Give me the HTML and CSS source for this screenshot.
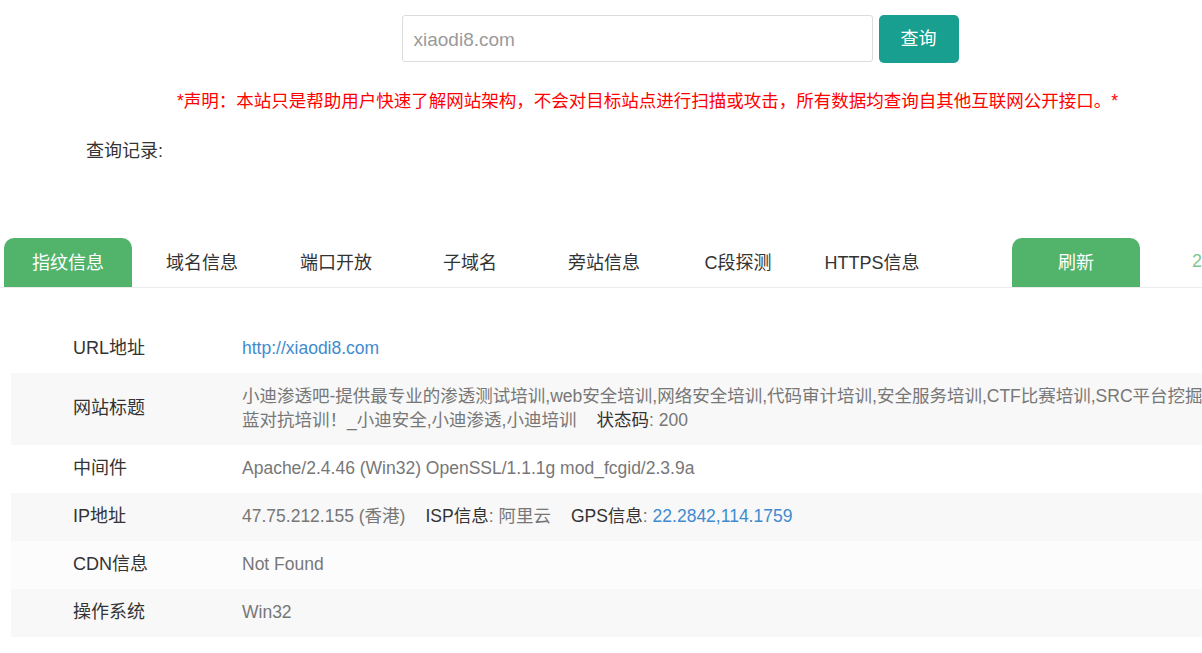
FILE: index.html
```html
<!DOCTYPE html>
<html lang="zh-CN">
<head>
<meta charset="utf-8">
<title>指纹信息</title>
<link rel="stylesheet" href="styles.css">
</head>
<body>
<div class="page">
  <div class="search">
    <input class="search-input" type="text" placeholder="xiaodi8.com">
    <button class="search-btn">查询</button>
  </div>
  <p class="notice">*声明：本站只是帮助用户快速了解网站架构，不会对目标站点进行扫描或攻击，所有数据均查询自其他互联网公开接口。*</p>
  <p class="history">查询记录:</p>

  <div class="tabbar">
    <div class="tab active">指纹信息</div>
    <div class="tab">域名信息</div>
    <div class="tab">端口开放</div>
    <div class="tab">子域名</div>
    <div class="tab">旁站信息</div>
    <div class="tab">C段探测</div>
    <div class="tab">HTTPS信息</div>
    <div class="tab refresh">刷新</div>
    <div class="stamp">2021-05-20 10:21:36</div>
  </div>

  <div class="info">
    <div class="row r-white">
      <div class="label">URL地址</div>
      <div class="value"><a class="link" href="#">http://xiaodi8.com</a></div>
    </div>
    <div class="row r-grey">
      <div class="label">网站标题</div>
      <div class="value">小迪渗透吧-提供最专业的渗透测试培训,web安全培训,网络安全培训,代码审计培训,安全服务培训,CTF比赛培训,SRC平台挖掘培训,红<br>蓝对抗培训！_小迪安全,小迪渗透,小迪培训<span class="key gap">状态码</span>: 200</div>
    </div>
    <div class="row r-white">
      <div class="label">中间件</div>
      <div class="value">Apache/2.4.46 (Win32) OpenSSL/1.1.1g mod_fcgid/2.3.9a</div>
    </div>
    <div class="row r-grey">
      <div class="label">IP地址</div>
      <div class="value">47.75.212.155 (香港)<span class="key gap">ISP信息</span>: 阿里云<span class="key gap">GPS信息</span>: <span class="link">22.2842,114.1759</span></div>
    </div>
    <div class="row r-light">
      <div class="label">CDN信息</div>
      <div class="value">Not Found</div>
    </div>
    <div class="row r-grey">
      <div class="label">操作系统</div>
      <div class="value">Win32</div>
    </div>
  </div>
</div>
</body>
</html>
```

FILE: styles.css
```css
html, body {
  margin: 0;
  padding: 0;
  overflow: hidden;
  background: #fff;
}

body {
  font-family: "Liberation Sans", "Noto Sans CJK SC", sans-serif;
  color: #333;
  font-size: 18px;
}

.page {
  width: 1360px;
  padding-top: 15px;
}

.search {
  display: flex;
  justify-content: center;
  align-items: flex-start;
  height: 48px;
}

.search-input {
  box-sizing: border-box;
  width: 471px;
  height: 47px;
  border: 1px solid #dcdcdc;
  border-radius: 3px;
  padding: 3px 11px 0;
  font-family: inherit;
  font-size: 19px;
  color: #555;
  outline: none;
}

.search-input::placeholder {
  color: #9a9a9a;
}

.search-btn {
  margin-left: 6px;
  width: 80px;
  height: 48px;
  padding: 0 0 5px;
  border: none;
  border-radius: 5px;
  background: #199f8f;
  color: #fff;
  font-family: inherit;
  font-size: 18px;
}

.notice {
  margin: 26px 0 0 177px;
  line-height: 24px;
  color: #ff0000;
  font-size: 17.5px;
}

.history {
  margin: 26px 0 0 86px;
  line-height: 24px;
  font-size: 18px;
  color: #333;
}

.tabbar {
  margin-top: 75px;
  display: flex;
  align-items: stretch;
  gap: 6px;
  padding-left: 4px;
  height: 49px;
  border-bottom: 1px solid #ececec;
}

.tab {
  width: 128px;
  display: flex;
  align-items: center;
  justify-content: center;
  padding-bottom: 3px;
  box-sizing: border-box;
  border-radius: 10px 10px 0 0;
  color: #333;
  font-size: 18px;
}

.tab.active,
.tab.refresh {
  background: #52b36b;
  color: #fff;
}

.tab.refresh {
  margin-left: 70px;
}

.stamp {
  margin-left: 46px;
  display: flex;
  align-items: center;
  padding-bottom: 3px;
  color: #7cc992;
  font-size: 18px;
  white-space: nowrap;
}

.info {
  margin: 37px 0 0 11px;
}

.row {
  display: flex;
  padding: 11px 0 13px;
  line-height: 24px;
}

.r-white { background: #fff; }
.r-grey { background: #f8f8f8; }
.r-light { background: #fcfcfc; }

.label {
  width: 169px;
  flex: none;
  padding-left: 62px;
  display: flex;
  align-items: center;
  color: #333;
  font-size: 18px;
}

.value {
  flex: 1;
  color: #777;
  font-size: 17.5px;
  line-height: 24px;
  white-space: nowrap;
}

.link {
  color: #3f8bd0;
  text-decoration: none;
}

.key {
  color: #333;
}

.gap {
  margin-left: 20px;
}
```
